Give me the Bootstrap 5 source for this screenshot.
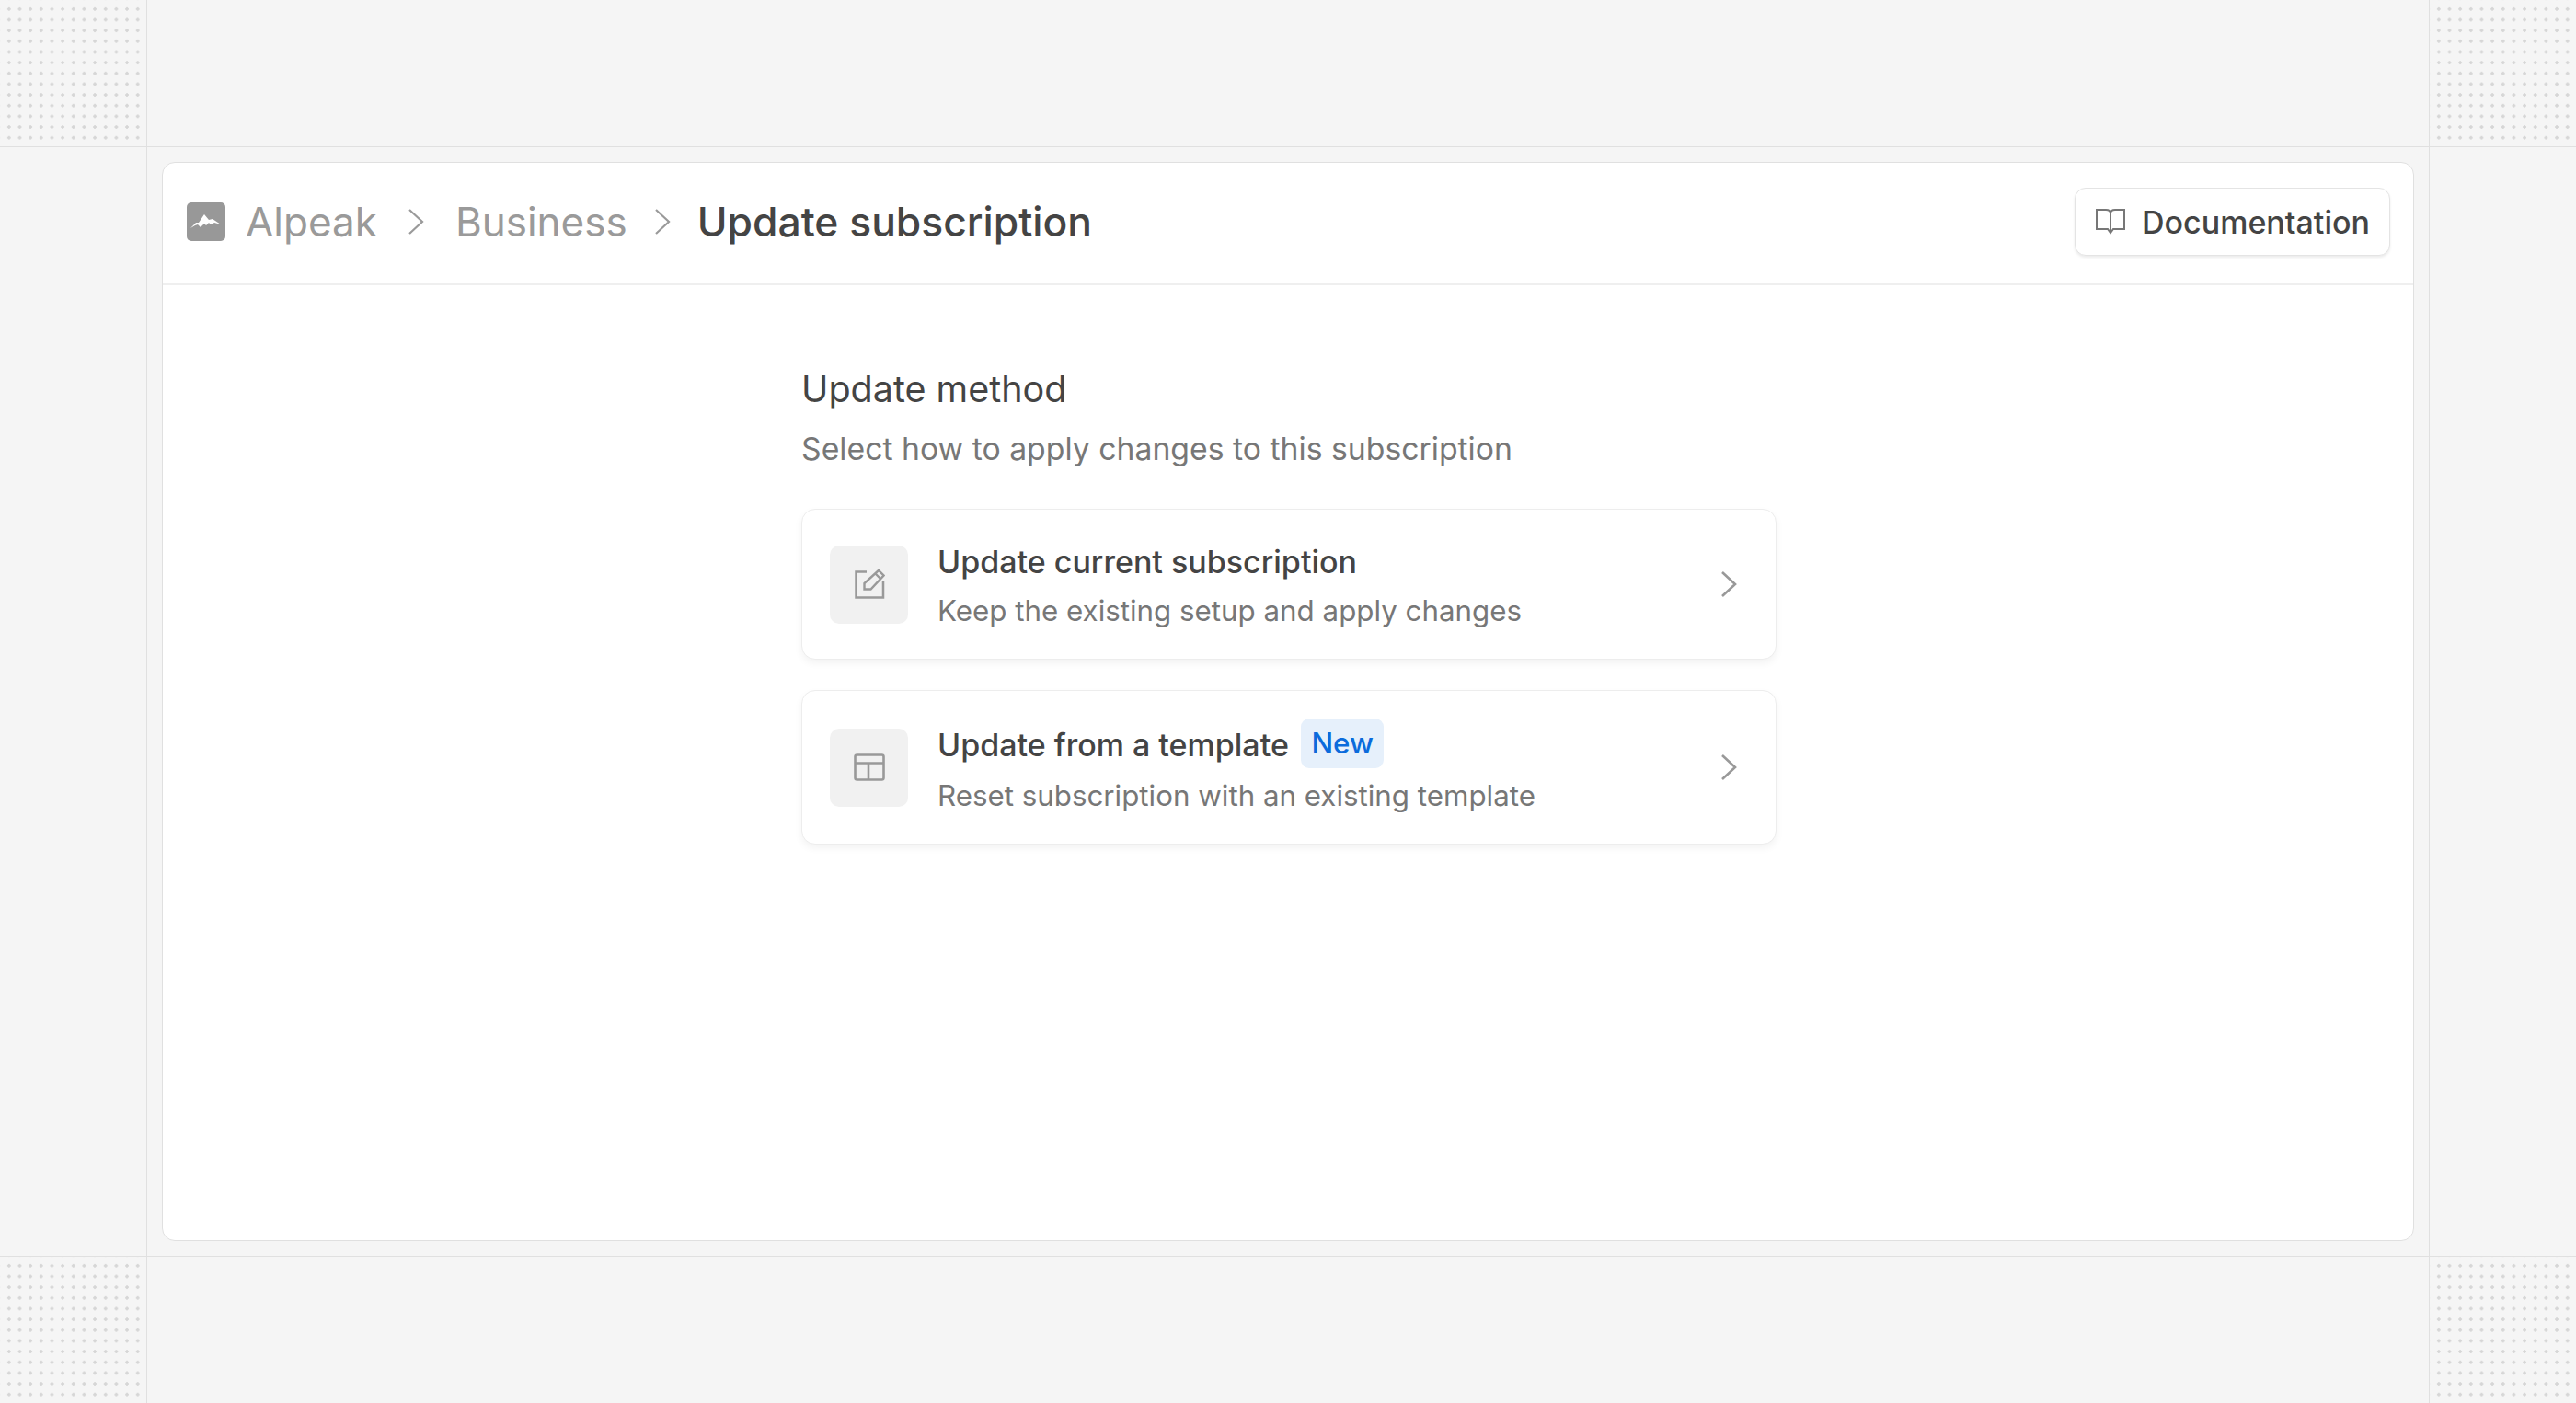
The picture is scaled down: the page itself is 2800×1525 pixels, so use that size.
<!DOCTYPE html>
<html lang="en">
<head>
  <meta charset="UTF-8">
  <meta name="viewport" content="width=device-width, initial-scale=1">
  <title>Update subscription</title>
  <link href="https://cdn.jsdelivr.net/npm/bootstrap@5.3.3/dist/css/bootstrap.min.css" rel="stylesheet">
  <style>
    html, body { height: 100%; }
    body { background: #f5f5f5; font-family: Inter, "Liberation Sans", sans-serif; color: #444; overflow: hidden; }
    .shell { display: grid; grid-template-columns: 160px 1fr 160px; grid-template-rows: 160px 1fr 160px; height: 100vh; }
    .cell-tl, .cell-tc, .cell-tr { border-bottom: 1px solid #e0e0e0; }
    .cell-tl, .cell-ml, .cell-bl { border-right: 1px solid #e0e0e0; }
    .cell-tr, .cell-mr, .cell-br { border-left: 1px solid #e0e0e0; }
    .cell-bl, .cell-bc, .cell-br { border-top: 1px solid #e0e0e0; }
    .dots {
      background-image: radial-gradient(circle at center, #d6d6d6 0, #d6d6d6 1.5px, transparent 1.8px);
      background-size: 11.67px 11.67px;
      background-position: 4px 4px;
    }
    .cell-mc { padding: 16px; min-height: 0; }
    .panel-box { height: 100%; border: 1px solid #e0e0e0; border-radius: 14px; background: #fff; }
    .panel-head { height: 133px; padding: 0 25px 3px 26px; border-bottom: 2px solid #efefef; }
    .logo-box { width: 42px; height: 42px; border-radius: 5px; background: #989898; margin-right: 22px; }
    .crumb { font-size: 44px; line-height: 56px; color: #9a9a9a; }
    .crumb-now { color: #444; font-weight: 450; font-size: 44.4px; }
    .crumb-sep { width: 22px; height: 30px; margin: 0 31.5px; }
    .crumb-sep-b { margin: 0 27px; }
    .doc-btn { height: 74px; padding: 0 21px 0 22px; border: 1px solid #e4e4e4; border-radius: 12px; background: #fff; box-shadow: 0 2px 3px rgba(0,0,0,.08); font-size: 34px; font-weight: 450; color: #444; gap: 18px; }
    .doc-btn:hover { background: #fff; color: #444; border-color: #e4e4e4; }
    .method-wrap { width: 1062px; margin: 0 auto; padding: 89px 0 0 2px; }
    .method-title { font-size: 39.5px; line-height: 48px; font-weight: 400; color: #444; margin: 0 0 16px; }
    .method-sub { font-size: 33.75px; line-height: 50px; color: #777; margin: 0 0 40px; }
    .option-card { border: 1px solid #ededed; border-radius: 15px; padding: 28px 30px; box-shadow: 0 4px 8px rgba(0,0,0,.05); margin-bottom: 33px; background: #fff; }
    .icon-tile { width: 85px; height: 85px; border-radius: 10px; background: #f1f1f1; margin-right: 32px; flex: none; }
    .option-title { font-size: 34px; line-height: 58px; font-weight: 450; color: #444; }
    .option-sub { font-size: 31.3px; line-height: 48px; color: #777; }
    .new-tag { background: #e6f0fb; color: #0b6bdc; font-size: 31.3px; font-weight: 450; line-height: 54px; height: 54px; padding: 0 11.5px; border-radius: 9px; margin: 2px 0 6px 13px; }
    .row-arrow { width: 18px; height: 30px; margin-right: 12px; flex: none; }
  </style>
</head>
<body>
  <script src="https://cdn.jsdelivr.net/npm/bootstrap@5.3.3/dist/js/bootstrap.bundle.min.js"></script>

  <div class="shell">
    <div class="cell-tl dots"></div>
    <div class="cell-tc"></div>
    <div class="cell-tr dots"></div>

    <div class="cell-ml"></div>
    <div class="cell-mc">
      <div class="panel-box">
        <header class="panel-head d-flex align-items-center justify-content-between">
          <nav class="d-flex align-items-center crumb">
            <span class="logo-box d-flex align-items-center justify-content-center">
              <svg width="34" height="18" viewBox="0 0 34 18"><path fill="#fff" d="M0 16 L6 10 L9 10 L15 1 L20 7 L24 6 L33 12 L26 10 L22 12 L20 10 L17 13 L15 11 L11 15 L8 12 L5 13 Z"/></svg>
            </span>
            <span>Alpeak</span>
            <svg class="crumb-sep" viewBox="0 0 22 30"><path d="M4 2 L18 15 L4 28" fill="none" stroke="#9a9a9a" stroke-width="2.2"/></svg>
            <span>Business</span>
            <svg class="crumb-sep crumb-sep-b" viewBox="0 0 22 30"><path d="M4 2 L18 15 L4 28" fill="none" stroke="#9a9a9a" stroke-width="2.2"/></svg>
            <span class="crumb-now">Update subscription</span>
          </nav>
          <button type="button" class="btn doc-btn d-flex align-items-center">
            <svg width="32" height="28" viewBox="0 0 32 28"><path d="M16 5 V26 M1 1 H11 Q16 1 16 5 Q16 1 21 1 H31 V22 H19 L16 26 L13 22 H1 Z" fill="none" stroke="#777" stroke-width="2"/></svg>
            Documentation
          </button>
        </header>

        <main class="method-wrap">
          <h2 class="method-title">Update method</h2>
          <p class="method-sub">Select how to apply changes to this subscription</p>

          <div class="option-card d-flex align-items-center">
            <div class="icon-tile d-flex align-items-center justify-content-center">
              <svg width="34" height="34" viewBox="0 0 34 34"><path d="M14 3.5 H2.5 V31.5 H32 V14" fill="none" stroke="#999" stroke-width="2.5"/><path d="M11.5 22.5 V16 L27 2 L32.5 7.5 L18.5 22.5 Z M23.5 5.5 L29 11" fill="none" stroke="#999" stroke-width="2.4"/></svg>
            </div>
            <div class="flex-grow-1">
              <div class="option-title">Update current subscription</div>
              <div class="option-sub">Keep the existing setup and apply changes</div>
            </div>
            <svg class="row-arrow" viewBox="0 0 18 30"><path d="M2 2 L16 15 L2 28" fill="none" stroke="#999" stroke-width="2.6"/></svg>
          </div>

          <div class="option-card d-flex align-items-center">
            <div class="icon-tile d-flex align-items-center justify-content-center">
              <svg width="34" height="30" viewBox="0 0 34 30"><rect x="1.5" y="1.5" width="31" height="27" rx="2" fill="none" stroke="#999" stroke-width="2.6"/><path d="M1.5 10.5 H32.5 M16 10.5 V28.5" fill="none" stroke="#999" stroke-width="2.6"/></svg>
            </div>
            <div class="flex-grow-1">
              <div class="d-flex align-items-center option-title">Update from a template <span class="badge new-tag">New</span></div>
              <div class="option-sub">Reset subscription with an existing template</div>
            </div>
            <svg class="row-arrow" viewBox="0 0 18 30"><path d="M2 2 L16 15 L2 28" fill="none" stroke="#999" stroke-width="2.6"/></svg>
          </div>
        </main>
      </div>
    </div>
    <div class="cell-mr"></div>

    <div class="cell-bl dots"></div>
    <div class="cell-bc"></div>
    <div class="cell-br dots"></div>
  </div>
</body>
</html>
